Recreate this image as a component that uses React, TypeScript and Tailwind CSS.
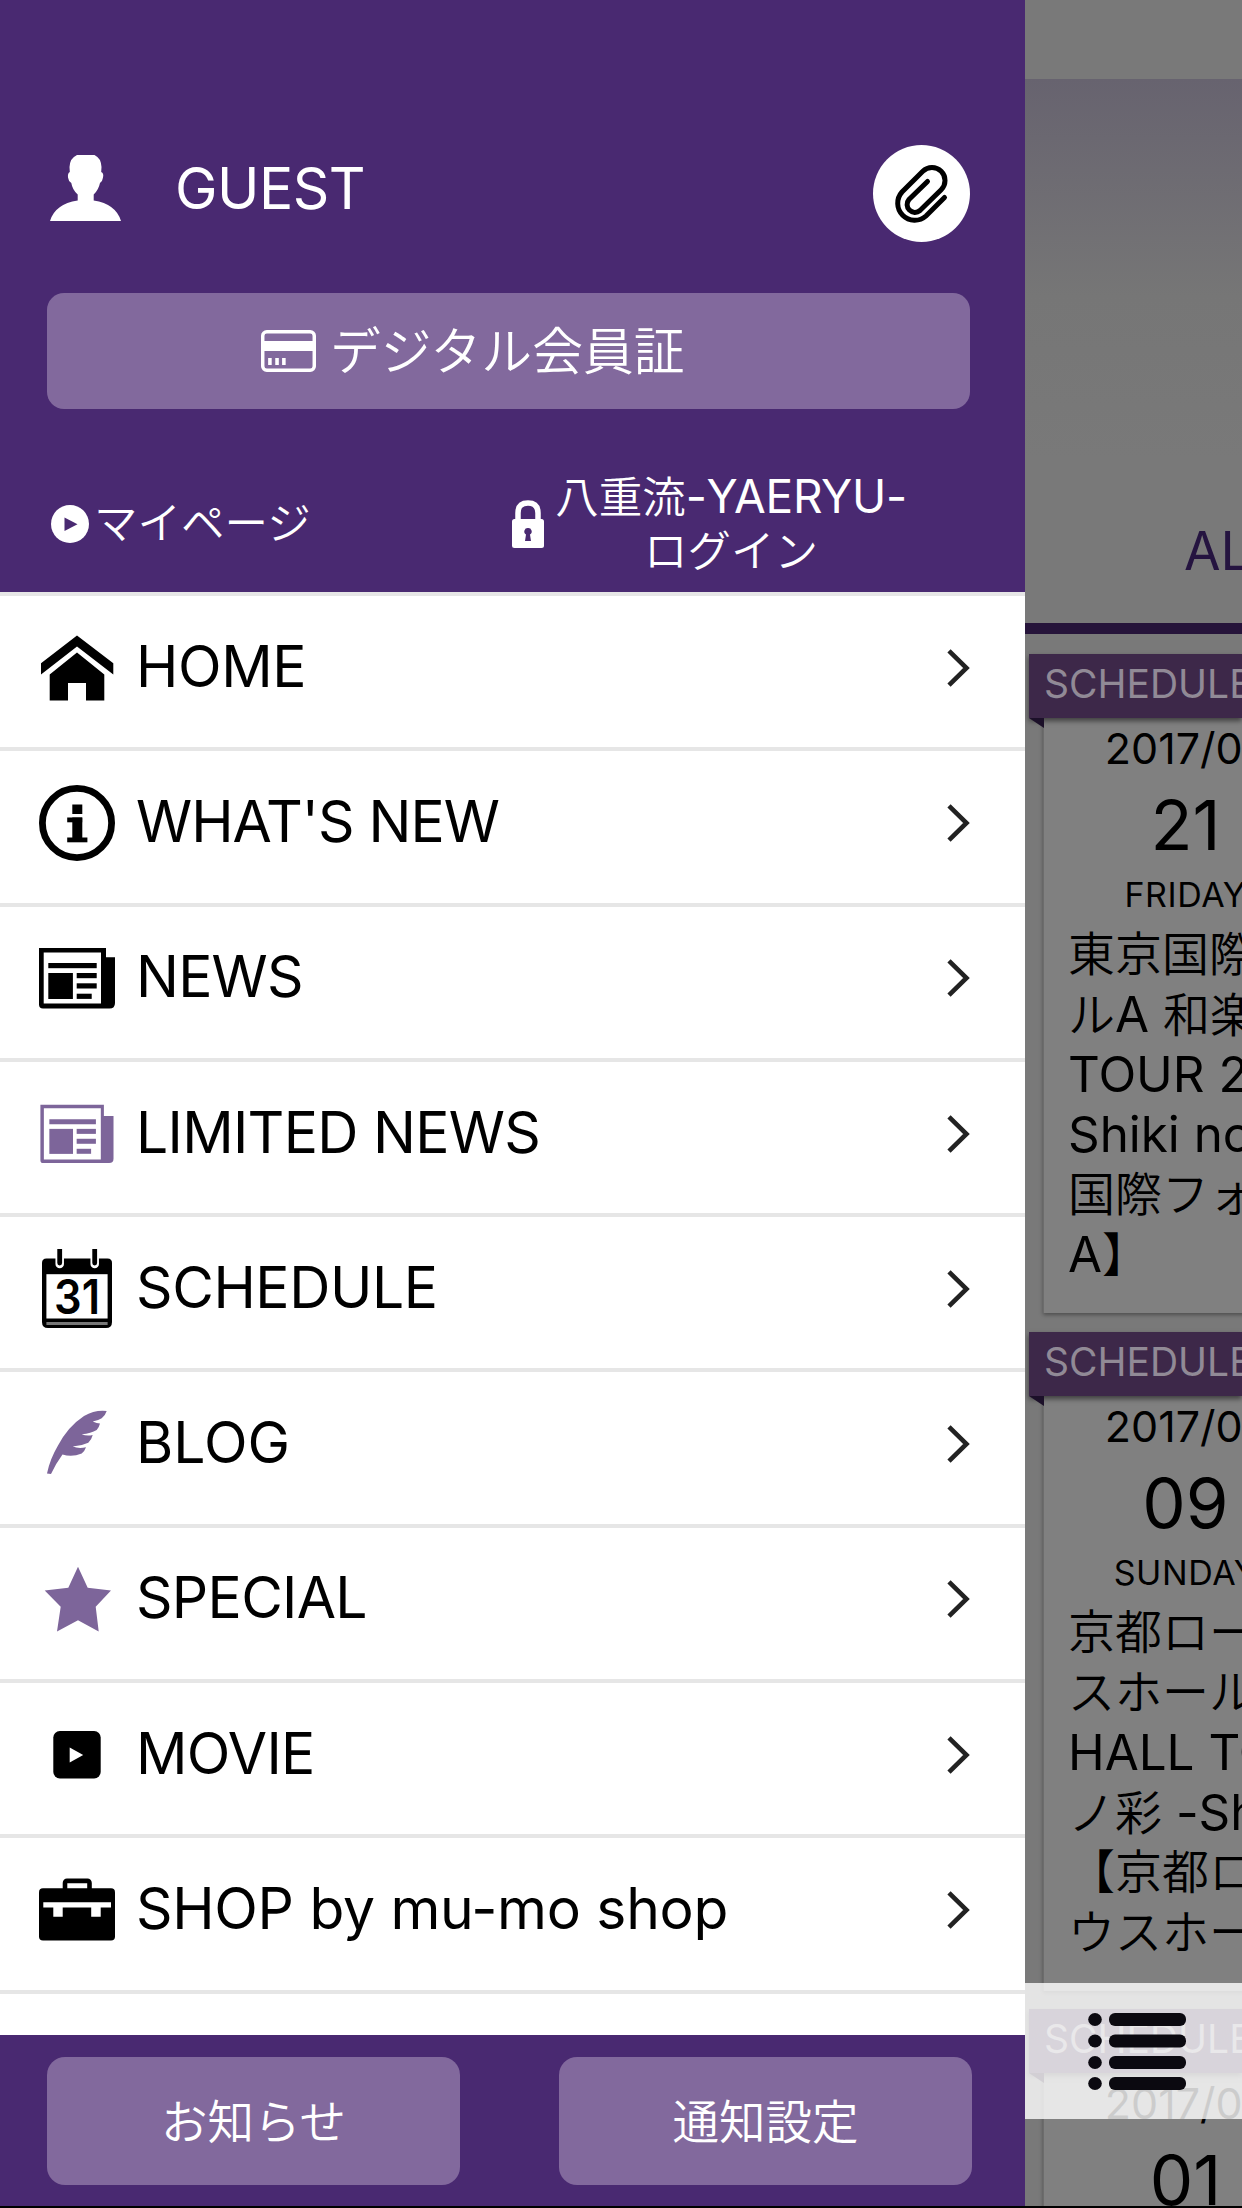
import type { ReactNode } from "react";

const PURPLE = "#7d659a";

function IconBox({ children }: { children: ReactNode }) {
  return (
    <svg width="76" height="80" viewBox="0 0 76 80" className="shrink-0">
      {children}
    </svg>
  );
}

function HomeIcon() {
  return (
    <IconBox>
      <path d="M38 7.5 74.3 35.2V46.5L38 18.5 2 46.5V35.2Z" />
      <path d="M38 24.5 65.3 46.5V72.5H47V55H29V72.5H10.7V46.5Z" />
    </IconBox>
  );
}

function InfoIcon() {
  return (
    <IconBox>
      <circle cx="38" cy="40" r="34.6" fill="none" stroke="#000" strokeWidth="6.8" />
      <rect x="33.3" y="21.5" width="10" height="9.5" />
      <rect x="28.2" y="34.5" width="15" height="4.8" />
      <rect x="33.3" y="34.5" width="10" height="23" />
      <rect x="28.2" y="54.5" width="20.2" height="4.8" />
    </IconBox>
  );
}

function NewsIcon({ color = "#000", thin = false }: { color?: string; thin?: boolean }) {
  return (
    <IconBox>
      <g fill={color} transform={thin ? "translate(1.4 1.2) scale(0.962)" : undefined}>
        <path
          fillRule="evenodd"
          d={
            thin
              ? "M0 10H66V21.5H76V66Q76 70.5 71.5 70.5H3Q0 70.5 0 67.5ZM3.6 13.6V66.8H62.8V13.6Z"
              : "M0 10H67V19.2H76V65Q76 70.5 70.5 70.5H4Q0 70.5 0 66.5ZM4.7 14.6V65.5H62V14.6Z"
          }
        />
        <rect x="9.3" y="25" width="48.4" height="5.2" />
        <rect x="9.3" y="35" width="24.6" height="26" />
        <rect x="37.7" y="35" width="20" height="5.2" />
        <rect x="37.7" y="45.3" width="20" height="5.2" />
        <rect x="37.7" y="55.7" width="15" height="5.2" />
      </g>
    </IconBox>
  );
}

function CalendarIcon() {
  return (
    <IconBox>
      <path d="M3 14Q3 9.5 7.5 9.5H68.5Q73 9.5 73 14V73Q73 79 67 79H9Q3 79 3 73Z" />
      <rect x="7.4" y="25.2" width="61.2" height="44.3" fill="#fff" />
      <rect x="7.4" y="73" width="61.2" height="3" fill="#777" />
      <path d="M20.7 0V15M55.7 0V15" stroke="#fff" strokeWidth="8.5" strokeLinecap="round" />
      <path d="M20.7 0V14M55.7 0V14" stroke="#000" strokeWidth="4.8" strokeLinecap="round" />
      <text
        x="38"
        y="65"
        textAnchor="middle"
        textLength="46"
        lengthAdjust="spacingAndGlyphs"
        className="font-['Inter',sans-serif] text-[48px] font-semibold"
      >
        31
      </text>
    </IconBox>
  );
}

function FeatherIcon() {
  return (
    <IconBox>
      <path
        fill={PURPLE}
        d="M67.7 6.9Q66 12 62.7 14.2Q59 16.5 53.7 17.6Q58 19.5 61 19.5Q60 23.5 57.7 26Q52 29.5 42.7 30.3Q48 32.5 53.7 31Q52.5 36 49.3 38.7Q42 42 33.7 42.6Q40 45 47 43.2Q45.5 47.5 42.7 49.5Q33 53.5 23.5 50.5Q16.5 60 12 70L8 69.4Q11 55 19 41.5Q29 22.5 45 12Q56 5.5 67.7 6.9Z"
      />
    </IconBox>
  );
}

function StarIcon() {
  return (
    <IconBox>
      <path
        fill={PURPLE}
        d="M39 7.8 48.7 28.8 72 31.5 56.7 47.8 59.7 72.5 39 61.2 18 72.5 21.7 47.8 5.7 31.5 29.3 28.8Z"
      />
    </IconBox>
  );
}

function MovieIcon() {
  return (
    <IconBox>
      <rect x="14.3" y="16" width="47.4" height="47.4" rx="6.5" />
      <path fill="#fff" d="M30.7 32.4 44.2 39.9 30.7 47.5Z" />
    </IconBox>
  );
}

function ShopIcon() {
  return (
    <IconBox>
      <rect x="26" y="10.9" width="24.5" height="14" rx="2" fill="none" stroke="#000" strokeWidth="4.6" />
      <rect x="0" y="18.3" width="76" height="52.2" rx="4" />
      <path fill="#fff" d="M4.3 32.2H72V37.5H61.7V46.8H52.2V37.5H23.7V46.8H14.3V37.5H4.3Z" />
    </IconBox>
  );
}

function Chevron() {
  return (
    <svg width="23" height="38" viewBox="0 0 23 38" fill="none" stroke="#222" strokeWidth="4.6">
      <path d="M2 1.8 19.5 19 2 36.2" />
    </svg>
  );
}

const menu = [
  { label: "HOME", icon: <HomeIcon />, tracking: "tracking-[-0.4px]" },
  { label: "WHAT'S NEW", icon: <InfoIcon />, tracking: "tracking-[-1px]" },
  { label: "NEWS", icon: <NewsIcon />, tracking: "tracking-[-0.8px]" },
  { label: "LIMITED NEWS", icon: <NewsIcon color={PURPLE} thin />, tracking: "tracking-[-0.7px]" },
  { label: "SCHEDULE", icon: <CalendarIcon />, tracking: "tracking-[-0.4px]" },
  { label: "BLOG", icon: <FeatherIcon />, tracking: "tracking-normal" },
  { label: "SPECIAL", icon: <StarIcon />, tracking: "tracking-[-0.7px]" },
  { label: "MOVIE", icon: <MovieIcon />, tracking: "tracking-[-0.7px]" },
  { label: "SHOP by mu-mo shop", icon: <ShopIcon />, tracking: "tracking-[-0.3px]" },
];

const events = [
  {
    month: "2017/07",
    day: "21",
    weekday: "FRIDAY",
    lines: ["東京国際フ", "ルA 和楽", "TOUR 2", "Shiki no", "国際フォ", "A】"],
  },
  {
    month: "2017/07",
    day: "09",
    weekday: "SUNDAY",
    lines: ["京都ロー", "スホール", "HALL TO", "ノ彩 -Sh", "【京都ロ", "ウスホー"],
  },
  { month: "2017/07", day: "01", weekday: "", lines: [] },
];

// Latin runs are set slightly larger and heavier than the kanji and kana beside them
function MixedText({ text }: { text: string }) {
  return (
    <>
      {text.split(/([ -~]+)/).map((part, i) =>
        i % 2 ? (
          <span key={i} className="text-[1.05em] font-normal">
            {part}
          </span>
        ) : (
          part
        )
      )}
    </>
  );
}

function Header() {
  return (
    <header className="h-[592px] shrink-0 bg-[#492971] pl-[47px] pr-[55px] pt-[145px] text-white">
      <div className="flex h-[97px] items-center">
        <div className="flex items-center pb-[11px] pl-[3px]">
          <svg width="71" height="66" viewBox="0 0 71 66" fill="currentColor">
            <path d="M27 0H44.5Q51 3 51.5 12L51.2 17Q54 18 53 22.5Q52.5 26.5 50 28Q48.5 35 43.7 39.5V45.5Q66 49 71 66H0Q5 49 27.7 45.5V39.5Q22.5 35 21.3 28Q18.5 26.5 18 22.5Q17.5 18 19.8 17L19.5 12Q20 3 27 0Z" />
          </svg>
          <span className="ml-[54px] text-[57px] leading-none tracking-[-0.5px]">GUEST</span>
        </div>
        <button className="ml-auto flex h-[97px] w-[97px] items-center justify-center rounded-full bg-white pr-[3px]">
          <svg width="62" height="66" viewBox="0 0 62 66" fill="none" stroke="#000" strokeWidth="5" strokeLinecap="round">
            <path d="M55.5 36.5 37 55A17 17 0 0 1 13 31L33.8 10.3A13 13 0 0 1 52.2 28.7L31 49.5A7.8 7.8 0 0 1 20 38.5L38.5 20.5" />
          </svg>
        </button>
      </div>

      <button className="mt-[51px] flex h-[116px] w-full items-center rounded-[17px] bg-[#82699d] pl-[214px]">
        <svg width="55" height="42" viewBox="0 0 54 42" preserveAspectRatio="none">
          <rect x="1.7" y="1.7" width="50.6" height="38.6" rx="4" fill="none" stroke="#fff" strokeWidth="3.4" />
          <path fill="#fff" d="M1 11H53V21H1ZM7 28H10.5V35H7ZM14 28H17.5V35H14ZM20.7 28H24.2V35H20.7Z" />
        </svg>
        <span className="ml-[14px] pt-[2px] text-[50.8px] font-[350] leading-none">デジタル会員証</span>
      </button>

      <div className="mt-[47px] flex h-[136px] items-center pl-[4px]">
        <svg width="38" height="38" viewBox="0 0 38 38">
          <circle cx="19" cy="19" r="19" fill="#fff" />
          <path fill="#492971" d="M13.5 12.5 26.5 19.2 13.5 26Z" />
        </svg>
        <span className="ml-[5px] w-[418px] text-[43.5px] font-[350] leading-none">マイページ</span>
        <svg width="32" height="48" viewBox="0 0 32 48">
          <path d="M6 21V13Q6 3 16 3T26 13V21" fill="none" stroke="#fff" strokeWidth="5.5" />
          <rect y="19" width="32" height="29" rx="2.5" fill="#fff" />
          <path fill="#492971" d="M16 28A3.5 3.5 0 0 1 18 34.5L19 41H13L14 34.5A3.5 3.5 0 0 1 16 28Z" />
        </svg>
        <span className="ml-[11px] w-[352px] whitespace-nowrap pb-[1px] text-center text-[43.5px] font-[350] leading-[54px]">
          八重流<span className="text-[46px] font-normal tracking-[-0.3px]">-YAERYU-</span>
          <br />
          ログイン
        </span>
      </div>
    </header>
  );
}

function Drawer() {
  return (
    <aside className="flex w-[1025px] shrink-0 flex-col bg-white">
      <Header />
      <nav className="min-h-0 flex-1 overflow-hidden">
        {menu.map((item) => (
          <a
            key={item.label}
            className="flex h-[155.3px] items-center border-t-4 border-[#e6e6e6] pb-[8px] pl-[39px] pr-[55px] text-black"
          >
            {item.icon}
            <span className={`ml-[21px] flex-1 pb-[3px] text-[57px] leading-none ${item.tracking}`}>
              {item.label}
            </span>
            <Chevron />
          </a>
        ))}
        <div className="border-t-4 border-[#e6e6e6]" />
      </nav>
      <footer className="flex h-[173px] shrink-0 justify-between border-b-2 border-black bg-[#492971] pl-[47px] pr-[53px] pt-[22px] text-[46.5px] font-[350] text-white">
        <button className="h-[128px] w-[413px] rounded-[18px] bg-[#82699d] pt-[3px]">お知らせ</button>
        <button className="h-[128px] w-[413px] rounded-[18px] bg-[#82699d] pt-[3px]">通知設定</button>
      </footer>
    </aside>
  );
}

function EventCard({ month, day, weekday, lines }: (typeof events)[number]) {
  return (
    <article className="h-[677.5px]">
      <div className="relative z-10 ml-[4px] h-[64px] bg-[#3d2849] pl-[15px] text-[39px] leading-[60px] text-[#918a96] shadow-[0_3px_5px_rgba(0,0,0,0.5)]">
        SCHEDULE
        <svg width="15" height="10" viewBox="0 0 15 10" className="absolute left-0 top-full">
          <path fill="#1c1029" d="M0 0H15V10Z" />
        </svg>
      </div>
      <div className="ml-[18px] h-[595px] w-[600px] border-l border-[#6c6c6c] bg-[#808080] text-black shadow-[0_2px_4px_rgba(0,0,0,0.35)]">
        <div className="w-[283px] text-center">
          <div className="pt-[8px] text-[43px] leading-[44px]">{month}</div>
          <div className="pt-[19px] text-[69px] leading-[72px]">{day}</div>
          <div className="pt-[14px] text-[34px] leading-[40px] tracking-[0.6px]">{weekday}</div>
        </div>
        <p className="mt-[9px] whitespace-pre pl-[24px] text-[47px] font-[350] leading-[60px]">
          {lines.map((line) => (
            <span key={line} className="block h-[60px]">
              <MixedText text={line} />
            </span>
          ))}
        </p>
      </div>
    </article>
  );
}

function Timeline() {
  return (
    <main className="relative min-w-0 flex-1 overflow-hidden border-b-2 border-black bg-[#797979]">
      <div className="mt-[79px] h-[544px] bg-linear-to-b from-[#67636f] via-[#767676] via-40% to-[#797979] to-70% pl-[159px] pt-[441px] text-[53px] leading-[62px] text-[#251440]">
        ALL
      </div>
      <div className="mb-[20px] h-[11px] bg-[#26143a]" />
      {events.map((event) => (
        <EventCard key={event.day} {...event} />
      ))}
      {/* translucent tab bar floating over the cards */}
      <div className="absolute inset-x-0 top-[1983px] z-20 h-[136px] bg-white/80 pl-[63px] pt-[30px]">
        <svg width="98" height="78" viewBox="0 0 98 78" fill="#0b0910">
          {[0, 21.5, 43, 64].map((y) => (
            <g key={y}>
              <ellipse cx="7" cy={y + 6.5} rx="6.8" ry="6.5" />
              <rect x="21" y={y} width="77" height="13" rx="6" />
            </g>
          ))}
        </svg>
      </div>
    </main>
  );
}

export default function App() {
  return (
    <div className="flex h-[2208px] w-[1242px] overflow-hidden bg-white font-['Inter','Noto_Sans_CJK_JP',sans-serif]">
      <Drawer />
      <Timeline />
    </div>
  );
}
